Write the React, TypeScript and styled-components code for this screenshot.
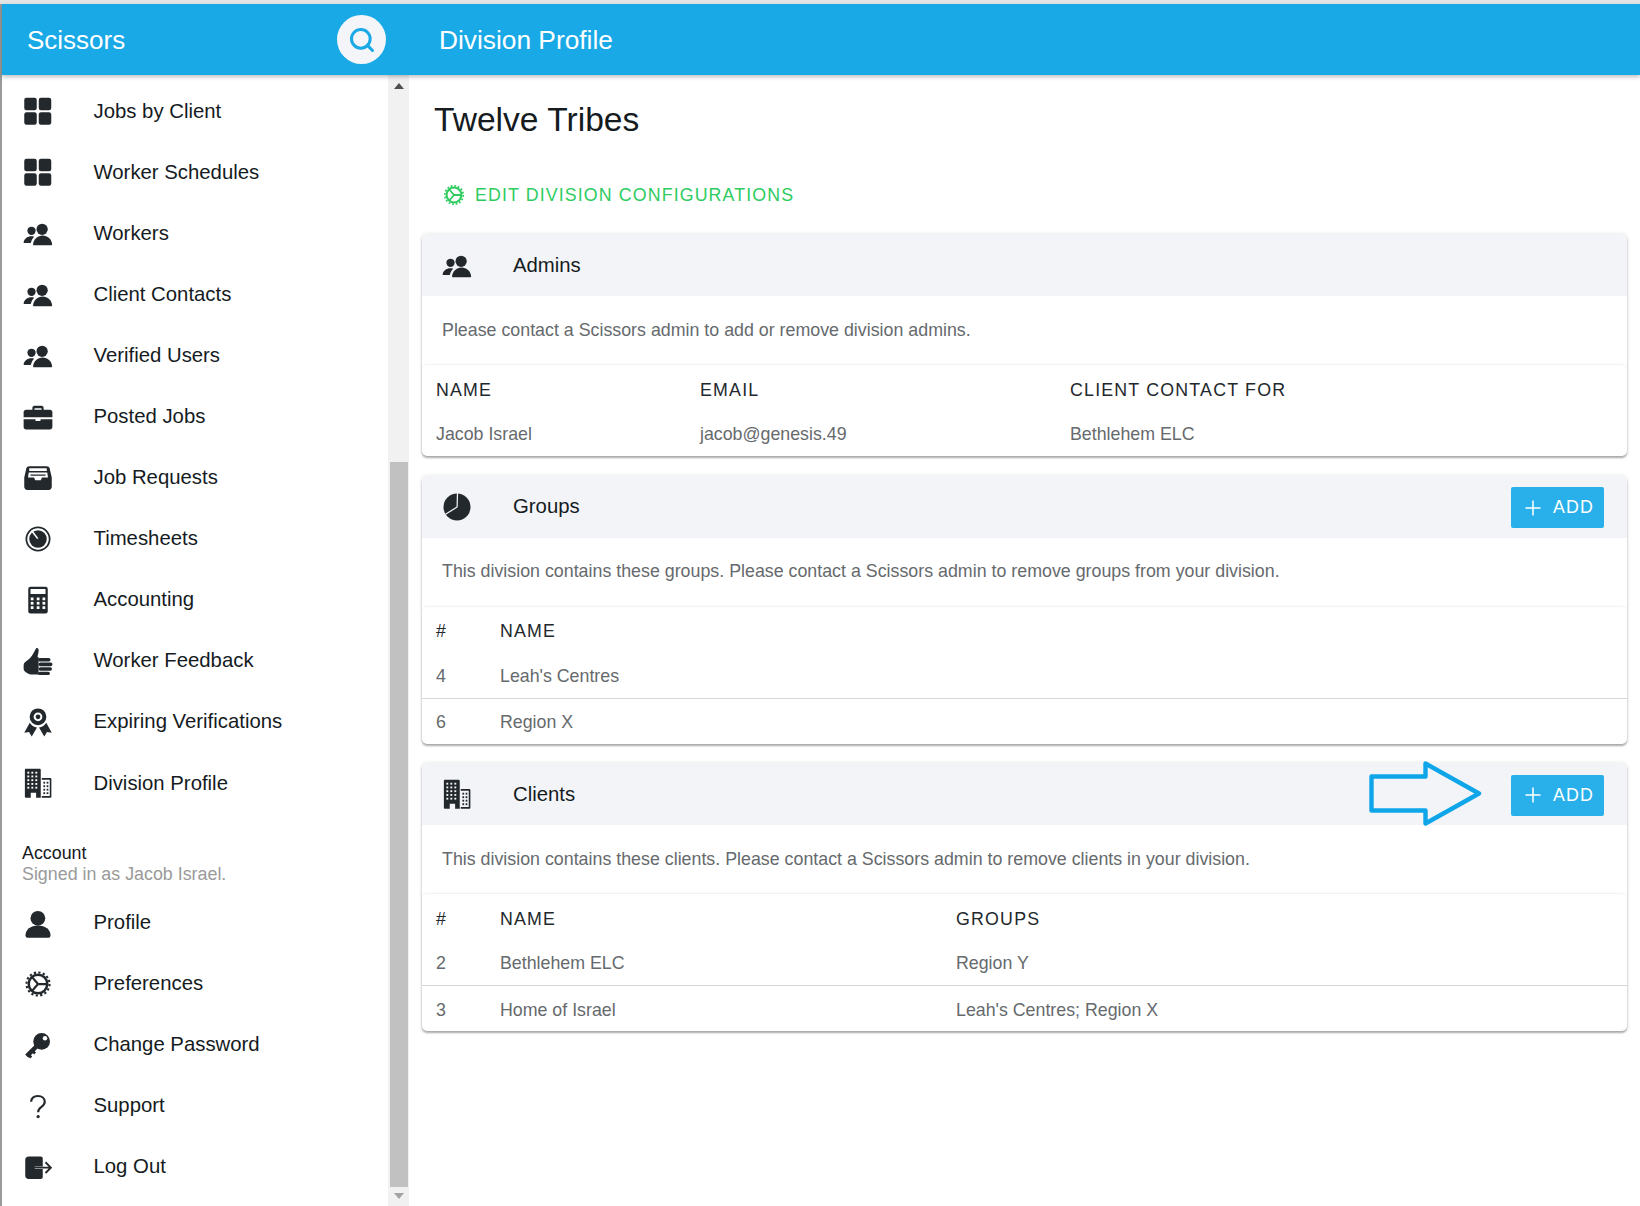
import React from "react";
import styled, { createGlobalStyle } from "styled-components";
import { Search } from "lucide-react";

const Global = createGlobalStyle`
  html, body { margin: 0; padding: 0; background: #fff; }
  body { font-family: "Liberation Sans", Arial, sans-serif; }
  * { box-sizing: border-box; }
`;

const Page = styled.div`
  position: relative;
  width: 1640px;
  height: 1206px;
  overflow: hidden;
  padding: 4px 0 0 2px;
  background: linear-gradient(#e4e4e4, #e4e4e4) top / 100% 4px no-repeat,
    linear-gradient(#9a9a9a, #9a9a9a) left / 2px 100% no-repeat, #fff;
  display: flex;
  flex-direction: column;
`;
const TopBar = styled.header`
  flex: none;
  height: 71px;
  background: #18a9e6;
  color: #fff;
  display: flex;
  align-items: center;
  box-shadow: 0 2px 4px rgba(0, 0, 0, 0.25);
  position: relative;
  z-index: 2;
`;
const Brand = styled.div`
  width: 437px;
  display: flex;
  align-items: center;
  padding-left: 25px;
  font-size: 26px;
`;
const BrandName = styled.span`
  width: 310px;
  padding-top: 1px;
`;
const SearchButton = styled.div`
  width: 49px;
  height: 49px;
  border-radius: 50%;
  background: #f3f5f9;
  color: #18a9e6;
  display: flex;
  align-items: center;
  justify-content: center;
`;
const PageTitle = styled.div`
  font-size: 26.3px;
  padding-top: 1px;
`;
const Body = styled.div`
  flex: 1;
  min-height: 0;
  display: flex;
`;
const Sidebar = styled.aside`
  width: 386px;
  flex: none;
  padding-top: 5.5px;
  background: #fff;
  border-bottom-left-radius: 12px;
`;
const NavRow = styled.a`
  height: 61.1px;
  display: flex;
  align-items: center;
  padding-left: 20.5px;
  font-size: 20.33px;
  color: #151b1e;
`;
const IconSlot = styled.span`
  width: 30px;
  height: 30px;
  flex: none;
  margin-right: 41px;
  color: #23282c;
  display: flex;
`;
const AccountBlock = styled.div`
  padding: 29px 0 7.4px 20px;
  font-size: 17.85px;
  line-height: 21px;
  color: #151b1e;
`;
const SignedIn = styled.div`
  color: #9a9a9a;
`;
const ScrollTrack = styled.div`
  width: 21px;
  flex: none;
  background: #f1f1f1;
  display: flex;
  flex-direction: column;
  align-items: center;
  padding: 8px 0 7px;
`;
const ScrollArrow = styled.div<{ $down?: boolean }>`
  width: 0;
  height: 0;
  border-left: 5.5px solid transparent;
  border-right: 5.5px solid transparent;
  ${(p) =>
    p.$down
      ? "border-top: 6px solid #a3a3a3;"
      : "border-bottom: 6px solid #505050;"}
`;
const ScrollThumb = styled.div`
  width: 18px;
  flex: 1;
  background: #c1c1c1;
  margin: 373px 0 6px;
`;
const Main = styled.main`
  flex: 1;
  min-width: 0;
  padding: 25px 13px 0;
`;
const Title = styled.h1`
  margin: 0;
  padding-left: 12px;
  font-weight: 400;
  font-size: 33.6px;
  line-height: 40px;
  color: #151b1e;
`;
const EditLink = styled.a`
  margin: 35px 0 19px 20px;
  height: 40px;
  display: flex;
  align-items: center;
  gap: 9px;
  font-size: 17.8px;
  letter-spacing: 1.12px;
  color: #2ecc5f;
`;
const Card = styled.section`
  position: relative;
  margin-bottom: 19.5px;
  width: 1205px;
  background: #fff;
  border-radius: 5px;
  box-shadow: 0 2px 2px rgba(0, 0, 0, 0.3), 0 0 4px rgba(0, 0, 0, 0.12);
  --icon-bg: #f3f4f8;
`;
const CardHead = styled.div`
  height: 62px;
  padding: 0 23px 0 20px;
  background: #f3f4f8;
  border-radius: 5px 5px 0 0;
  display: flex;
  align-items: center;
  font-size: 20.33px;
  color: #151b1e;
`;
const CardIcon = styled.span`
  width: 30px;
  height: 30px;
  flex: none;
  margin-right: 41px;
  color: #23282c;
  display: flex;
`;
const CardName = styled.span`
  flex: 1;
`;
const AddButton = styled.button`
  width: 93px;
  height: 41px;
  margin-top: 2px;
  border: 0;
  border-radius: 2px;
  background: #29b0ea;
  color: #fff;
  display: flex;
  align-items: center;
  gap: 12px;
  font: 400 17.8px "Liberation Sans", Arial, sans-serif;
  letter-spacing: 1.15px;
  padding: 0 0 0 14px;
`;
const Note = styled.p`
  margin: 0;
  height: 69px;
  padding: 0 0 1px 20px;
  display: flex;
  align-items: center;
  font-size: 17.82px;
  color: #666a6d;
`;
const Grid = styled.div`
  border-radius: 5px;
  box-shadow: 0 -1px 2px rgba(0, 0, 0, 0.06);
`;
const Row = styled.div<{ $cols: string; $head?: boolean; $rule?: boolean }>`
  display: grid;
  grid-template-columns: ${(p) => p.$cols};
  align-items: center;
  height: 45.5px;
  padding: ${(p) => (p.$head ? "5px" : "3px")} 0 0 14px;
  font-size: 17.8px;
  letter-spacing: ${(p) => (p.$head ? "1.2px" : "0")};
  color: ${(p) => (p.$head ? "#23282c" : "#666a6d")};
  ${(p) => (p.$rule ? "border-top: 1px solid #d6d6d6; height: 46px;" : "")}
`;
const Arrow = styled.svg`
  position: absolute;
  left: 1366px;
  top: 758px;
  z-index: 3;
`;

type P = { size?: number };
const Svg: React.FC<P & { children: React.ReactNode }> = ({ size = 30, children }) => (
  <svg width={size} height={size} viewBox="0 0 24 24" fill="currentColor">
    {children}
  </svg>
);
const BG = "var(--icon-bg, #fff)";

const GridIcon = () => (
  <Svg>
    <rect x="1" y="1.400" width="10" height="10" rx="1.800" />
    <rect x="12.600" y="1.400" width="10" height="10" rx="1.800" />
    <rect x="1" y="13" width="10" height="10" rx="1.800" />
    <rect x="12.600" y="13" width="10" height="10" rx="1.800" />
  </Svg>
);
const PeopleIcon = () => (
  <Svg>
    <circle cx="6.800" cy="10.200" r="3.300" />
    <circle cx="15.300" cy="9" r="4.500" />
    <path d="M.5 19.600c.3-2.900 2.900-5 6.300-5 .8 0 1.500.1 2.100.3-1.300 1.300-2.200 3-2.500 4.700-.1.200-.2.300-.4.300H.8c-.2 0-.3-.1-.3-.3z" />
    <path d="M8 21.200c.5-4.400 3.700-7.200 7.700-7.200s7.200 2.800 7.600 7.200c0 .4-.2.600-.5.600H8.500c-.3 0-.5-.2-.5-.6z" />
  </Svg>
);
const CaseIcon = () => (
  <Svg>
    <path d="M7.500 7V4.800C7.500 3.800 8.200 3 9.200 3h5.600c1 0 1.700.8 1.700 1.800V7h-1.700V5H9.200v2z" />
    <path d="M2.500 6.200h19c1.100 0 2 .9 2 2v4h-23v-4c0-1.100.9-2 2-2z" />
    <path d="M.5 13.800H10v1.400h4v-1.400h9.500V20c0 1.200-.9 2-2 2h-19c-1.100 0-2-.8-2-2z" />
  </Svg>
);
const InboxIcon = () => (
  <Svg>
    <path d="M5 2.500h14c1.100 0 1.900.6 2.300 1.600L23 11.500V19c0 1.400-1 2.500-2.400 2.500H3.400C2 21.500 1 20.400 1 19v-7.500l1.700-7.400C3.100 3.100 3.900 2.500 5 2.500z" />
    <path fill={BG} d="M5 4.200h14v2.200H5zM4.600 7.600h14.800l.6 4h-4.800l-1 2.200h-4.400l-1-2.200H4z" />
    <path d="M6 9.200h12v1H6z" />
  </Svg>
);
const TimerIcon = () => (
  <Svg>
    <circle cx="12" cy="12" r="9.300" fill="none" stroke="currentColor" strokeWidth="1.400" />
    <circle cx="12" cy="12" r="7" />
    <path d="M6.800 5.200l5.600 7.300" fill="none" stroke={BG} strokeWidth="1.300" />
    <circle cx="12.400" cy="12.500" r="1.100" />
  </Svg>
);
const CalcIcon = () => (
  <Svg>
    <rect x="4.200" y="1.300" width="15.600" height="21.400" rx="1.800" />
    <rect x="6" y="3.200" width="12" height="4" fill={BG} />
    {[10, 13.500, 17].map((y) =>
      [6.200, 11, 15.600].map((x) => (
        <rect key={`${x}-${y}`} x={x} y={y} width="2.200" height="2.200" fill={BG} />
      ))
    )}
  </Svg>
);
const ThumbIcon = () => (
  <Svg>
    <g transform="translate(0 1.200)">
      <path d="M10.500.500c1.200-.4 2 .4 2 1.600 0 2-.6 3.500-.9 5.400l.9.2v13.800H6.200c-1.200 0-1.800-.8-3-1.200C1.500 19.600.5 18.400.5 16.800v-2.500c0-1.500.7-2.500 2-3.400 2.300-1.700 4.300-3.200 5.600-6z" />
      <rect x="12" y="8.300" width="10" height="2.900" rx="1.400" />
      <rect x="12.500" y="12" width="11" height="2.900" rx="1.400" />
      <rect x="12.500" y="15.700" width="10.700" height="2.900" rx="1.400" />
      <rect x="12" y="19.300" width="9.500" height="2.700" rx="1.300" />
    </g>
  </Svg>
);
const AwardIcon = () => (
  <Svg>
    <circle cx="12" cy="7.800" r="5.100" fill="none" stroke="currentColor" strokeWidth="3.200" />
    <circle cx="12" cy="7.800" r="1.900" />
    <path d="M5.400 12.600L1 20.500l3.800-.5 2.200 3.600 4.200-7.200c-2.600-.3-4.500-1.700-5.800-3.800z" />
    <path d="M18.600 12.600L23 20.500l-3.800-.5-2.200 3.600-4.200-7.200c2.600-.3 4.500-1.700 5.800-3.800z" />
  </Svg>
);
const BuildingIcon = () => (
  <Svg>
    <path d="M1.500 1.500c0-.6.400-1 1-1h10.700c.6 0 1 .4 1 1v22.200h-3.700v-4H6.200v4H2.500c-.6 0-1-.4-1-1z" />
    {[3, 6, 9, 12, 15].map((y) =>
      [3.500, 6.700, 9.900].map((x) => (
        <rect key={`${x}-${y}`} x={x} y={y} width="1.500" height="1.500" fill={BG} />
      ))
    )}
    <path d="M15 8h6.700c.6 0 1 .4 1 1v13.700c0 .6-.4 1-1 1H15v-1.300h6.400V9.300H15z" />
    {[11, 13.800, 16.600, 19.400].map((y) =>
      [16.300, 18.900].map((x) => <rect key={`${x}-${y}`} x={x} y={y} width="1.400" height="1.500" />)
    )}
  </Svg>
);
const UserIcon = () => (
  <Svg>
    <circle cx="11.900" cy="8.200" r="5.900" />
    <path d="M2 21.800c0-4.400 4-7.800 10-7.800s10 3.400 10 7.800c0 1.100-.6 1.900-1.500 1.900h-17c-.9 0-1.500-.8-1.500-1.900z" />
  </Svg>
);
const CogIcon: React.FC<P> = ({ size = 30 }) => (
  <Svg size={size}>
    <circle cx="12" cy="12" r="9.200" fill="none" stroke="currentColor" strokeWidth="1.700" strokeDasharray="1.800 1.810" />
    <circle cx="12" cy="12" r="7.400" fill="none" stroke="currentColor" strokeWidth="2" />
    <path d="M7.300 6.500L12 12l-4.700 5.500M12 12h7.600" fill="none" stroke="currentColor" strokeWidth="1.800" />
  </Svg>
);
const KeyIcon = () => (
  <Svg>
    <g transform="translate(-.4 -.2)">
      <circle cx="15.300" cy="9.300" r="6.700" />
      <path d="M11.500 13L3.400 21.100" fill="none" stroke="currentColor" strokeWidth="3.600" />
      <path d="M4.800 18.400l3 3-1.600 1.500-3-3zM8 15.400l2.800 2.800-1.500 1.500-2.800-2.800z" />
      <circle cx="18" cy="6.700" r="1.800" fill={BG} />
    </g>
  </Svg>
);
const HelpIcon = () => (
  <Svg>
    <path d="M6.500 8.600C6.700 5.500 8.900 4 12 4c3 0 5.400 1.700 5.400 4.600 0 2-1 3.100-2.800 4.300-1.800 1.200-2.500 2-2.500 4.100" fill="none" stroke="currentColor" strokeWidth="1.700" />
    <circle cx="12.100" cy="20.400" r="1.300" />
  </Svg>
);
const LogoutIcon = () => (
  <Svg>
    <path d="M4.500 3.500H14c1.200 0 1.800.7 1.800 1.800v6.200H9.500v2h6.300v6.200c0 1.100-.6 1.800-1.800 1.800H4.500C2.900 21.500 1.800 20.400 1.800 19V6C1.800 4.600 2.900 3.500 4.500 3.500z" />
    <path d="M9.500 12.500h12.500M18 8.200l4.300 4.300-4.300 4.300" fill="none" stroke="currentColor" strokeWidth="1.500" />
  </Svg>
);
const PieIcon = () => (
  <Svg>
    <circle cx="12" cy="12" r="10.800" />
    <path d="M12.400.5L12.100 12 2.500 18" fill="none" stroke={BG} strokeWidth="1" />
  </Svg>
);
const PlusIcon = () => (
  <svg width="16" height="16" viewBox="0 0 16 16" fill="none" stroke="currentColor" strokeWidth="1.500">
    <path d="M8 .5v15M.5 8h15" />
  </svg>
);

const primary: [React.FC, string][] = [
  [GridIcon, "Jobs by Client"],
  [GridIcon, "Worker Schedules"],
  [PeopleIcon, "Workers"],
  [PeopleIcon, "Client Contacts"],
  [PeopleIcon, "Verified Users"],
  [CaseIcon, "Posted Jobs"],
  [InboxIcon, "Job Requests"],
  [TimerIcon, "Timesheets"],
  [CalcIcon, "Accounting"],
  [ThumbIcon, "Worker Feedback"],
  [AwardIcon, "Expiring Verifications"],
  [BuildingIcon, "Division Profile"],
];
const account: [React.FC, string][] = [
  [UserIcon, "Profile"],
  [CogIcon, "Preferences"],
  [KeyIcon, "Change Password"],
  [HelpIcon, "Support"],
  [LogoutIcon, "Log Out"],
];

const NavItem: React.FC<{ icon: React.FC; label: string }> = ({ icon: I, label }) => (
  <NavRow>
    <IconSlot>
      <I />
    </IconSlot>
    {label}
  </NavRow>
);

const Section: React.FC<{
  icon: React.FC;
  name: string;
  add?: boolean;
  note: string;
  cols: string;
  head: string[];
  rows: string[][];
}> = ({ icon: I, name, add, note, cols, head, rows }) => (
  <Card>
    <CardHead>
      <CardIcon>
        <I />
      </CardIcon>
      <CardName>{name}</CardName>
      {add && (
        <AddButton>
          <PlusIcon />
          ADD
        </AddButton>
      )}
    </CardHead>
    <Note>{note}</Note>
    <Grid>
      <Row $cols={cols} $head>
        {head.map((h) => (
          <span key={h}>{h}</span>
        ))}
      </Row>
      {rows.map((r, i) => (
        <Row $cols={cols} $rule={i > 0} key={r[0]}>
          {r.map((c) => (
            <span key={c}>{c}</span>
          ))}
        </Row>
      ))}
    </Grid>
  </Card>
);

export default function App() {
  return (
    <Page>
      <Global />
      <TopBar>
        <Brand>
          <BrandName>Scissors</BrandName>
          <SearchButton>
            <Search size={28} strokeWidth={2.6} />
          </SearchButton>
        </Brand>
        <PageTitle>Division Profile</PageTitle>
      </TopBar>
      <Body>
        <Sidebar>
          {primary.map(([I, l]) => (
            <NavItem key={l} icon={I} label={l} />
          ))}
          <AccountBlock>
            Account
            <SignedIn>Signed in as Jacob Israel.</SignedIn>
          </AccountBlock>
          {account.map(([I, l]) => (
            <NavItem key={l} icon={I} label={l} />
          ))}
        </Sidebar>
        <ScrollTrack>
          <ScrollArrow />
          <ScrollThumb />
          <ScrollArrow $down />
        </ScrollTrack>
        <Main>
          <Title>Twelve Tribes</Title>
          <EditLink>
            <CogIcon size={24} />
            EDIT DIVISION CONFIGURATIONS
          </EditLink>
          <Section
            icon={PeopleIcon}
            name="Admins"
            note="Please contact a Scissors admin to add or remove division admins."
            cols="264px 370px 1fr"
            head={["NAME", "EMAIL", "CLIENT CONTACT FOR"]}
            rows={[["Jacob Israel", "jacob@genesis.49", "Bethlehem ELC"]]}
          />
          <Section
            icon={PieIcon}
            name="Groups"
            add
            note="This division contains these groups. Please contact a Scissors admin to remove groups from your division."
            cols="64px 1fr"
            head={["#", "NAME"]}
            rows={[
              ["4", "Leah's Centres"],
              ["6", "Region X"],
            ]}
          />
          <Section
            icon={BuildingIcon}
            name="Clients"
            add
            note="This division contains these clients. Please contact a Scissors admin to remove clients in your division."
            cols="64px 456px 1fr"
            head={["#", "NAME", "GROUPS"]}
            rows={[
              ["2", "Bethlehem ELC", "Region Y"],
              ["3", "Home of Israel", "Leah's Centres; Region X"],
            ]}
          />
        </Main>
      </Body>
      <Arrow width="120" height="72" viewBox="0 0 120 72" fill="none">
        <path
          d="M5.500 18.500H59.500V5.500L113 35.500 59.500 65.500V52.500H5.500z"
          stroke="#0ea5e9"
          strokeWidth="4.400"
          strokeLinejoin="round"
        />
      </Arrow>
    </Page>
  );
}
